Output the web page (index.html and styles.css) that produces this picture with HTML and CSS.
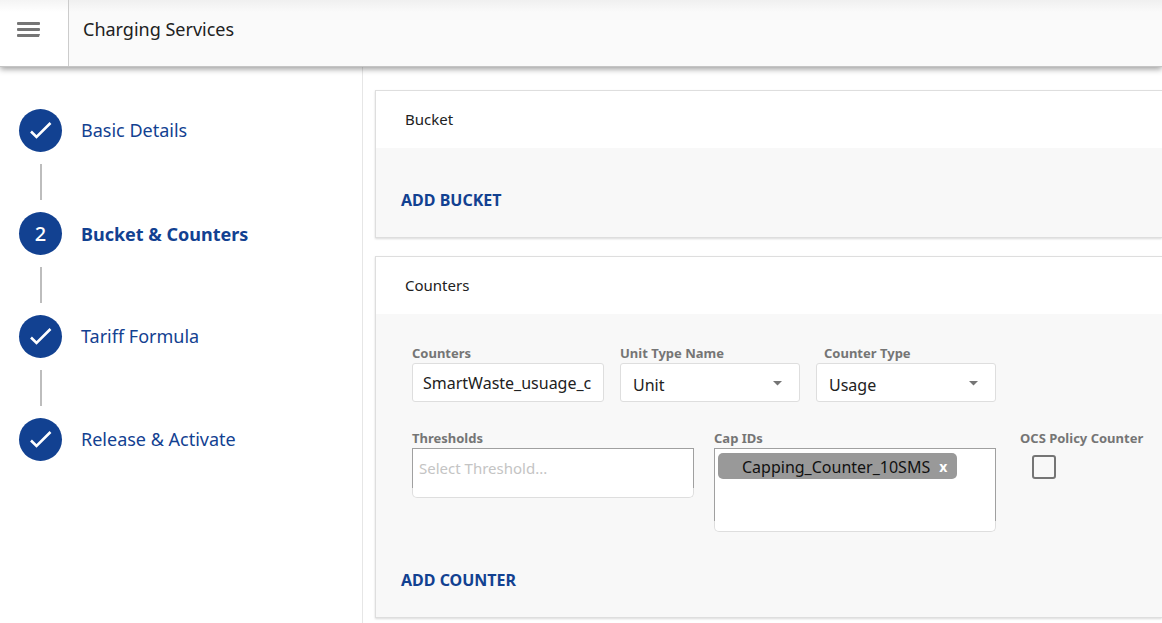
FILE: index.html
```html
<!DOCTYPE html>
<html lang="en">
<head>
<meta charset="utf-8">
<title>Charging Services</title>
<link rel="stylesheet" href="styles.css">
</head>
<body>
<header class="topbar">
  <button class="menu" type="button" aria-label="Menu">
    <svg width="24" height="16" viewBox="0 0 24 16" fill="#757575"><rect y="0" width="23" height="3" rx="1"/><rect y="6" width="23" height="3" rx="1"/><path d="M1 12h22l-1 3H1a1 1 0 0 1-1-1v-1a1 1 0 0 1 1-1z"/></svg>
  </button>
  <h1 class="title">Charging Services</h1>
</header>
<div class="layout">
  <nav class="sidebar" aria-label="Steps">
    <ol class="steps">
      <li class="step"><a class="step-link" href="#basic"><span class="dot"><svg width="24" height="20" viewBox="0 0 24 20"><path d="M2 10.500L7.500 16L21.500 2" fill="none" stroke="#fff" stroke-width="2.600"/></svg></span><span class="step-name">Basic Details</span></a></li>
      <li class="step"><a class="step-link current" href="#bucket" aria-current="step"><span class="dot">2</span><span>Bucket &amp; Counters</span></a></li>
      <li class="step"><a class="step-link" href="#tariff"><span class="dot"><svg width="24" height="20" viewBox="0 0 24 20"><path d="M2 10.500L7.500 16L21.500 2" fill="none" stroke="#fff" stroke-width="2.600"/></svg></span><span class="step-name">Tariff Formula</span></a></li>
      <li class="step"><a class="step-link" href="#release"><span class="dot"><svg width="24" height="20" viewBox="0 0 24 20"><path d="M2 10.500L7.500 16L21.500 2" fill="none" stroke="#fff" stroke-width="2.600"/></svg></span><span class="step-name">Release &amp; Activate</span></a></li>
    </ol>
  </nav>
  <main class="content">
    <section class="card">
      <h2 class="card-title">Bucket</h2>
      <div class="card-body card-body-empty">
        <button class="add" type="button">ADD BUCKET</button>
      </div>
    </section>
    <section class="card">
      <h2 class="card-title">Counters</h2>
      <div class="card-body">
        <div class="fields">
          <div class="row">
            <div class="field field-name">
              <label class="label" for="counter">Counters</label>
              <input class="box" id="counter" type="text" value="SmartWaste_usuage_c">
            </div>
            <div class="field field-select">
              <label class="label" for="unit">Unit Type Name</label>
              <div class="select">
                <select class="box" id="unit"><option>Unit</option></select>
                <svg class="arrow" width="10" height="5" viewBox="0 0 10 5"><path d="M0 0h9L4.500 4.500z" fill="#757575"/></svg>
              </div>
            </div>
            <div class="field field-select">
              <label class="label label-inset" for="type">Counter Type</label>
              <div class="select">
                <select class="box" id="type"><option>Usage</option></select>
                <svg class="arrow" width="10" height="5" viewBox="0 0 10 5"><path d="M0 0h9L4.500 4.500z" fill="#757575"/></svg>
              </div>
            </div>
          </div>
          <div class="row row-wide">
            <div class="field field-list">
              <label class="label" for="threshold">Thresholds</label>
              <input class="list threshold" id="threshold" type="text" placeholder="Select Threshold...">
              <div class="list-foot"></div>
            </div>
            <div class="field field-list">
              <span class="label" id="cap-label">Cap IDs</span>
              <div class="list chips" role="group" aria-labelledby="cap-label">
                <span class="chip">Capping_Counter_10SMS <button class="remove" type="button" aria-label="Remove Capping_Counter_10SMS">x</button></span>
              </div>
              <div class="list-foot"></div>
            </div>
            <div class="field">
              <label class="label" for="ocs">OCS Policy Counter</label>
              <input class="check" id="ocs" type="checkbox">
            </div>
          </div>
        </div>
        <button class="add" type="button">ADD COUNTER</button>
      </div>
    </section>
  </main>
</div>
</body>
</html>
```
FILE: styles.css
```css
* { box-sizing: border-box; }
html { height: 100%; }
body {
  display: flex;
  flex-direction: column;
  min-height: 100%;
  margin: 0;
  background: #fff;
  color: #212121;
  font: 16px/20px "Noto Sans", sans-serif;
}
button, input, select { font: inherit; color: inherit; margin: 0; }
button { border: 0; padding: 0; background: none; }

.topbar {
  display: flex;
  min-height: 67px;
  border-bottom: 1px solid #c4c4c4;
  background: linear-gradient(#f0f0f0, #fafafa 12px);
  box-shadow: 0 2px 6px rgba(0, 0, 0, 0.4);
  z-index: 1;
}
.menu {
  flex: none;
  width: 69px;
  padding: 0 0 6px 17px;
  border-right: 1px solid #ccc;
  background: linear-gradient(#f4f4f4, #fff 12px);
  text-align: left;
}
.menu svg { display: block; }
.title { margin: 0; padding: 17px 14px; font-size: 18px; line-height: 24px; font-weight: 400; }

.layout { display: flex; flex: 1; }
.sidebar { flex: none; width: 363px; border-right: 1px solid #e6e6e6; padding: 42px 19px; }
.steps { margin: 0; padding: 0; list-style: none; }
.step + .step::before {
  content: "";
  display: block;
  width: 2px;
  height: 36px;
  margin: 12px 21px;
  background: #bdbdbd;
}
.step-link { display: flex; align-items: center; gap: 19px; color: #124191; font-size: 18px; line-height: 24px; text-decoration: none; }
.step-name { padding-bottom: 2px; }
.current { font-weight: 700; }
.dot {
  display: flex;
  align-items: center;
  justify-content: center;
  width: 43px;
  height: 43px;
  border-radius: 50%;
  background: #124191;
  color: #fff;
  font-size: 20px;
  font-weight: 500;
}

.content { flex: 1; min-width: 0; padding: 23px 0 4px 12px; }
.card {
  border: 1px solid #dedede;
  border-right: 0;
  box-shadow: 0 1px 2px rgba(0, 0, 0, 0.15);
  margin-bottom: 18px;
}
.card:last-child { margin-bottom: 0; }
.card-title { margin: 0; padding: 18px 29px 19px; font-size: 15px; line-height: 20px; font-weight: 400; }
.card-body { padding: 29px 0 27px 25px; background: #f8f8f8; }
.card-body-empty { padding-top: 42px; }
.add { display: block; color: #124191; font-weight: 700; }

.fields { display: grid; gap: 26px; padding: 0 11px 38px; }
.row { display: flex; align-items: flex-start; gap: 16px; }
.row-wide { gap: 20px; }
.field { display: flex; flex-direction: column; flex: none; }
.field-name { width: 192px; }
.field-select { width: 180px; }
.field-list { width: 282px; }
.field-list + .field:last-child { margin-left: 4px; }
.label { color: #757575; font-size: 13px; font-weight: 700; white-space: nowrap; }
.label-inset { padding-left: 8px; }
.box {
  width: 100%;
  height: 39px;
  padding: 0 10px;
  border: 1px solid #dedede;
  border-radius: 3px;
  background: #fff;
}
.select { position: relative; }
.select .box { appearance: none; padding: 4px 12px 0; }
.arrow { position: absolute; right: 17px; top: 18px; }

.list {
  height: 40px;
  padding: 4px 3px;
  border: 1px solid #a0a0a0;
  border-bottom: 0;
  border-radius: 0;
  background: #fff;
}
.threshold { padding: 0 6px 2px; font-size: 15px; }
.threshold::placeholder { color: #c4c4c4; }
.chips { display: flex; align-items: flex-start; height: 73px; }
.list-foot { height: 10px; border: 1px solid #dedede; border-top: 0; border-radius: 0 0 5px 5px; background: #fff; }
.chips + .list-foot { height: 11px; }
.chip {
  display: flex;
  gap: 9px;
  padding: 4px 10px 2px 24px;
  border-radius: 5px;
  background: #999;
  color: #111;
}
.remove { color: #fff; font-size: 14px; font-weight: 700; }
.check { appearance: none; width: 24px; height: 24px; margin: 7px 12px; border: 2px solid #757575; border-radius: 3px; }
```
